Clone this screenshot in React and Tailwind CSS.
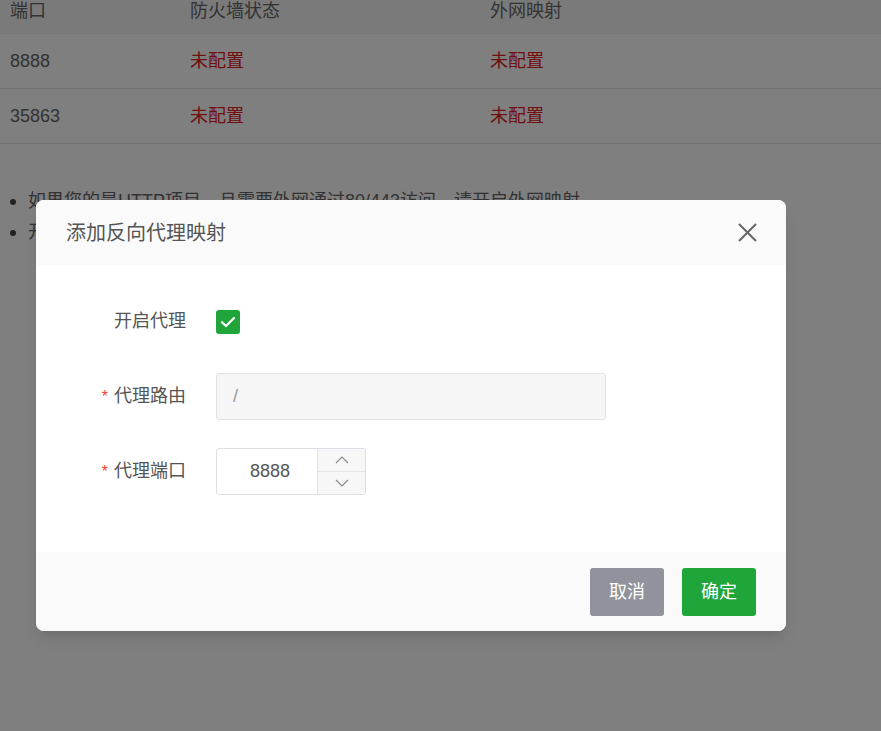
import React, { useState } from 'react';

const font = { fontFamily: '"Liberation Sans", "Noto Sans CJK SC", sans-serif' };

const ports = [
  { port: '8888', firewall: '未配置', mapping: '未配置' },
  { port: '35863', firewall: '未配置', mapping: '未配置' },
];

const tips = [
  '如果您的是HTTP项目，且需要外网通过80/443访问，请开启外网映射',
  '开启外网映射前，请确保项目已绑定域名',
];

const FormRow = ({ label, required, children }) => (
  <div className="flex items-center h-[47px]">
    <div className="w-[150px] text-right text-[18px] text-[#555]">
      {required && <span className="text-[#ef3b3b] mr-[6px] text-[16px]">*</span>}
      {label}
    </div>
    <div className="ml-[30px] flex items-center h-full">{children}</div>
  </div>
);

const ReverseProxyModal = () => {
  const [enabled, setEnabled] = useState(true);
  const [port, setPort] = useState(8888);

  return (
    <div className="absolute left-[36px] top-[200px] w-[750px] rounded-[8px] overflow-hidden bg-white shadow-lg">
      <div className="h-[65px] bg-[#fafafa] flex items-center justify-between pl-[30px] pr-[29px]">
        <span className="text-[20px] text-[#555]">添加反向代理映射</span>
        <button className="w-[20px] h-[20px] flex items-center justify-center">
          <svg width="19" height="19" viewBox="0 0 19 19" fill="none" stroke="#666" strokeWidth="2">
            <path d="M1 1L18 18M18 1L1 18" />
          </svg>
        </button>
      </div>

      <div className="pt-[33px] pb-[57px] flex flex-col gap-[28px]">
        <FormRow label="开启代理">
          <button
            onClick={() => setEnabled(!enabled)}
            className={`w-[24px] h-[24px] rounded-[3px] flex items-center justify-center ${enabled ? 'bg-[#20a53a]' : 'bg-white border border-[#ccc]'}`}
          >
            {enabled && (
              <svg width="16" height="12" viewBox="0 0 16 12" fill="none" stroke="white" strokeWidth="2.2" strokeLinecap="round" strokeLinejoin="round">
                <path d="M2 6.2L6 10L14 2" />
              </svg>
            )}
          </button>
        </FormRow>

        <FormRow label="代理路由" required>
          <input
            type="text"
            placeholder="/"
            disabled
            className="w-[390px] h-[47px] bg-[#f6f6f6] border border-[#e2e2e2] rounded-[3px] px-[16px] text-[18px] text-[#555] placeholder:text-[#999] outline-none"
          />
        </FormRow>

        <FormRow label="代理端口" required>
          <div className="flex w-[150px] h-[47px] border border-[#dcdfe6] rounded-[3px] overflow-hidden">
            <input
              type="text"
              value={port}
              onChange={(e) => setPort(e.target.value)}
              className="w-[101px] h-full pl-[6px] text-center text-[18px] text-[#555] outline-none border-r border-[#e4e4e4]"
            />
            <div className="flex-1 flex flex-col bg-[#f7f7f7]">
              <button onClick={() => setPort(Number(port) + 1)} className="flex-1 flex items-center justify-center border-b border-[#e4e4e4]">
                <svg width="14" height="8" viewBox="0 0 14 8" fill="none" stroke="#888" strokeWidth="1.1">
                  <path d="M1 7L7 1L13 7" />
                </svg>
              </button>
              <button onClick={() => setPort(Number(port) - 1)} className="flex-1 flex items-center justify-center">
                <svg width="14" height="8" viewBox="0 0 14 8" fill="none" stroke="#888" strokeWidth="1.1">
                  <path d="M1 1L7 7L13 1" />
                </svg>
              </button>
            </div>
          </div>
        </FormRow>
      </div>

      <div className="h-[79px] bg-[#fafafa] flex items-center justify-end gap-[18px] pr-[30px] pt-[1px]">
        <button className="w-[74px] h-[48px] rounded-[3px] bg-[#90939b] text-white text-[18px]">取消</button>
        <button className="w-[74px] h-[48px] rounded-[3px] bg-[#20a53a] text-white text-[18px]">确定</button>
      </div>
    </div>
  );
};

export default function App() {
  return (
    <div className="relative w-[881px] h-[731px] overflow-hidden bg-white" style={font}>
      <div className="-mt-[11px]">
        <div className="flex h-[45px] items-center bg-[#f5f5f5] text-[18px] text-[#666] border-b border-[#ececec]">
          <div className="w-[180px] pl-[10px]">端口</div>
          <div className="w-[300px] pl-[10px]">防火墙状态</div>
          <div className="pl-[10px]">外网映射</div>
        </div>
        {ports.map((p) => (
          <div key={p.port} className="flex h-[55px] items-center text-[18px] border-b border-[#e6e6e6]">
            <div className="w-[180px] pl-[10px] text-[#666]">{p.port}</div>
            <div className="w-[300px] pl-[10px] text-[#e02020]">{p.firewall}</div>
            <div className="pl-[10px] text-[#e02020]">{p.mapping}</div>
          </div>
        ))}
        <ul className="mt-[42px] text-[18px] text-[#666] leading-[31px]">
          {tips.map((t) => (
            <li key={t} className="flex items-center">
              <span className="w-[6px] h-[6px] rounded-full bg-[#444] ml-[10px] mr-[12px]" />
              {t}
            </li>
          ))}
        </ul>
      </div>

      <div className="absolute inset-0 bg-black/50" />
      <ReverseProxyModal />
    </div>
  );
}
